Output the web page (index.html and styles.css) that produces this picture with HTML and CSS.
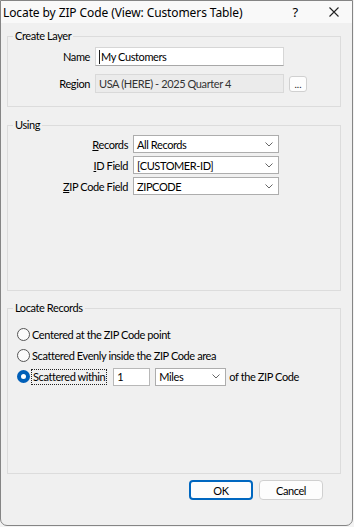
FILE: index.html
```html
<!DOCTYPE html>
<html lang="en">
<head>
    <meta charset="UTF-8">
    <meta name="viewport" content="width=device-width, initial-scale=1.0">
    <title>Locate by ZIP Code</title>
    <link rel="stylesheet" href="styles.css">
</head>
<body>
    <div class="dialog">
        <div class="titlebar">
            <span class="title">Locate by ZIP Code (View: Customers Table)</span>
            <span class="help">?</span>
            <span class="close">
                <svg width="10" height="10" viewBox="0 0 10 10"><path d="M0.5 0.5 L9.5 9.5 M9.5 0.5 L0.5 9.5" stroke="#222" stroke-width="1.1" fill="none"/></svg>
            </span>
        </div>

        <div class="content">
            <fieldset class="group group-layer">
                <legend>Create Layer</legend>
                <div class="form-grid layer-grid">
                    <label class="lbl">Name</label>
                    <div class="textbox"><span class="caret"></span>My Customers</div>
                    <span></span>

                    <label class="lbl">Region</label>
                    <div class="textbox disabled">USA (HERE) - 2025 Quarter 4</div>
                    <button class="dots">...</button>
                </div>
            </fieldset>

            <fieldset class="group group-using">
                <legend>Using</legend>
                <div class="form-grid using-grid">
                    <label class="lbl"><u>R</u>ecords</label>
                    <div class="combo">All Records<svg class="chev" width="8" height="5" viewBox="0 0 8 5"><path d="M0.5 0.5 L4 4 L7.5 0.5" stroke="#666" fill="none"/></svg></div>

                    <label class="lbl"><u>I</u>D Field</label>
                    <div class="combo">[CUSTOMER-ID]<svg class="chev" width="8" height="5" viewBox="0 0 8 5"><path d="M0.5 0.5 L4 4 L7.5 0.5" stroke="#666" fill="none"/></svg></div>

                    <label class="lbl"><u>Z</u>IP Code Field</label>
                    <div class="combo">ZIPCODE<svg class="chev" width="8" height="5" viewBox="0 0 8 5"><path d="M0.5 0.5 L4 4 L7.5 0.5" stroke="#666" fill="none"/></svg></div>
                </div>
            </fieldset>

            <fieldset class="group group-locate">
                <legend>Locate Records</legend>
                <div class="radio-list">
                    <div class="radio-row"><span class="radio"></span><span>Centered at the ZIP Code point</span></div>
                    <div class="radio-row"><span class="radio"></span><span>Scattered Evenly inside the ZIP Code area</span></div>
                    <div class="radio-row">
                        <span class="radio checked"></span>
                        <span class="focus">Scattered within</span>
                        <div class="textbox small">1</div>
                        <div class="combo miles">Miles<svg class="chev" width="8" height="5" viewBox="0 0 8 5"><path d="M0.5 0.5 L4 4 L7.5 0.5" stroke="#666" fill="none"/></svg></div>
                        <span class="suffix">of the ZIP Code</span>
                    </div>
                </div>
            </fieldset>

            <div class="buttons">
                <button class="btn default">OK</button>
                <button class="btn">Cancel</button>
            </div>
        </div>
    </div>
</body>
</html>
```

FILE: styles.css
```css
* {
    box-sizing: border-box;
}

body {
    margin: 0;
    width: 354px;
    height: 527px;
    background-color: #f3f3f3;
    font-family: 'Lato', 'Noto Sans', sans-serif;
    font-size: 11px;
    letter-spacing: -0.4px;
    color: #000;
}

.dialog {
    width: 353px;
    height: 526px;
    background-color: #f0f0f0;
    border: 1px solid #858585;
    border-radius: 0 0 7px 7px;
    overflow: hidden;
}

.titlebar {
    height: 22px;
    display: flex;
    align-items: center;
    background-color: #f9f9f9;
    padding-left: 2px;
    font-family: 'Noto Sans', sans-serif;
    font-size: 12px;
    letter-spacing: -0.1px;
}

.title {
    flex: 1;
    white-space: nowrap;
}

.help {
    margin-right: 31px;
    font-size: 13px;
}

.close {
    margin-right: 13px;
    display: flex;
    align-items: center;
}

.content {
    padding: 6px 11px 0 6px;
}

.group {
    margin: 0;
    padding: 0;
    border: 1px solid #dcdcdc;
    min-width: 0;
}

.group legend {
    margin-left: 5px;
    padding: 0 2px;
    line-height: 14px;
}

.group-layer {
    height: 78px;
}

.group-using {
    height: 173px;
    margin-top: 11px;
}

.group-locate {
    height: 173px;
    margin-top: 10px;
}

.form-grid {
    display: grid;
    column-gap: 5px;
    align-items: center;
}

.layer-grid {
    grid-template-columns: 82px 189px 18px;
    row-gap: 8px;
    padding-top: 4px;
}

.using-grid {
    grid-template-columns: 120px 146px;
    row-gap: 3px;
    padding-top: 3px;
}

.lbl {
    text-align: right;
    white-space: nowrap;
}

.textbox {
    height: 19px;
    line-height: 17px;
    padding-left: 3px;
    background-color: #fff;
    border: 1px solid #d6d6d6;
    border-bottom-color: #a8a8a8;
    white-space: nowrap;
    display: flex;
    align-items: center;
}

.caret {
    width: 1px;
    height: 14px;
    background-color: #222;
    margin-right: 1px;
}

.textbox.disabled {
    background-color: #ebebeb;
    border-color: #d9d9d9;
    color: #333;
}

.dots {
    width: 18px;
    height: 16px;
    padding: 0;
    font-family: inherit;
    font-size: 10px;
    line-height: 10px;
    letter-spacing: 0;
    background-color: #fdfdfd;
    border: 1px solid #d0d0d0;
    border-radius: 3px;
    color: #222;
}

.combo {
    height: 18px;
    padding: 0 5px 0 3px;
    background-color: #fff;
    border: 1px solid #adadad;
    display: flex;
    align-items: center;
    justify-content: space-between;
    white-space: nowrap;
}

.chev {
    flex: none;
}

.radio-list {
    display: flex;
    flex-direction: column;
    gap: 6px;
    padding: 12px 0 0 9px;
}

.radio-row {
    display: flex;
    align-items: center;
    height: 15px;
}

.radio {
    width: 13px;
    height: 13px;
    border: 1px solid #555;
    border-radius: 50%;
    background-color: #fbfbfb;
    margin-right: 2px;
    flex: none;
}

.radio.checked {
    border: 4px solid #005fb8;
    background-color: #fff;
}

.focus {
    outline: 1px dotted #222;
    outline-offset: 0;
    padding: 0 1px;
    line-height: 14px;
}

.textbox.small {
    width: 37px;
    height: 18px;
    margin-left: 7px;
    border-color: #b8b8b8;
}

.combo.miles {
    width: 71px;
    margin-left: 5px;
}

.suffix {
    margin-left: 3px;
}

.buttons {
    display: flex;
    justify-content: flex-end;
    gap: 6px;
    margin-top: 6px;
    padding-right: 18px;
}

.btn {
    width: 64px;
    height: 20px;
    padding: 0;
    font-family: inherit;
    font-size: 11px;
    letter-spacing: inherit;
    background-color: #fdfdfd;
    border: 1px solid #d0d0d0;
    border-radius: 4px;
    color: #000;
}

.btn.default {
    border: 2px solid #0067c0;
}
```
